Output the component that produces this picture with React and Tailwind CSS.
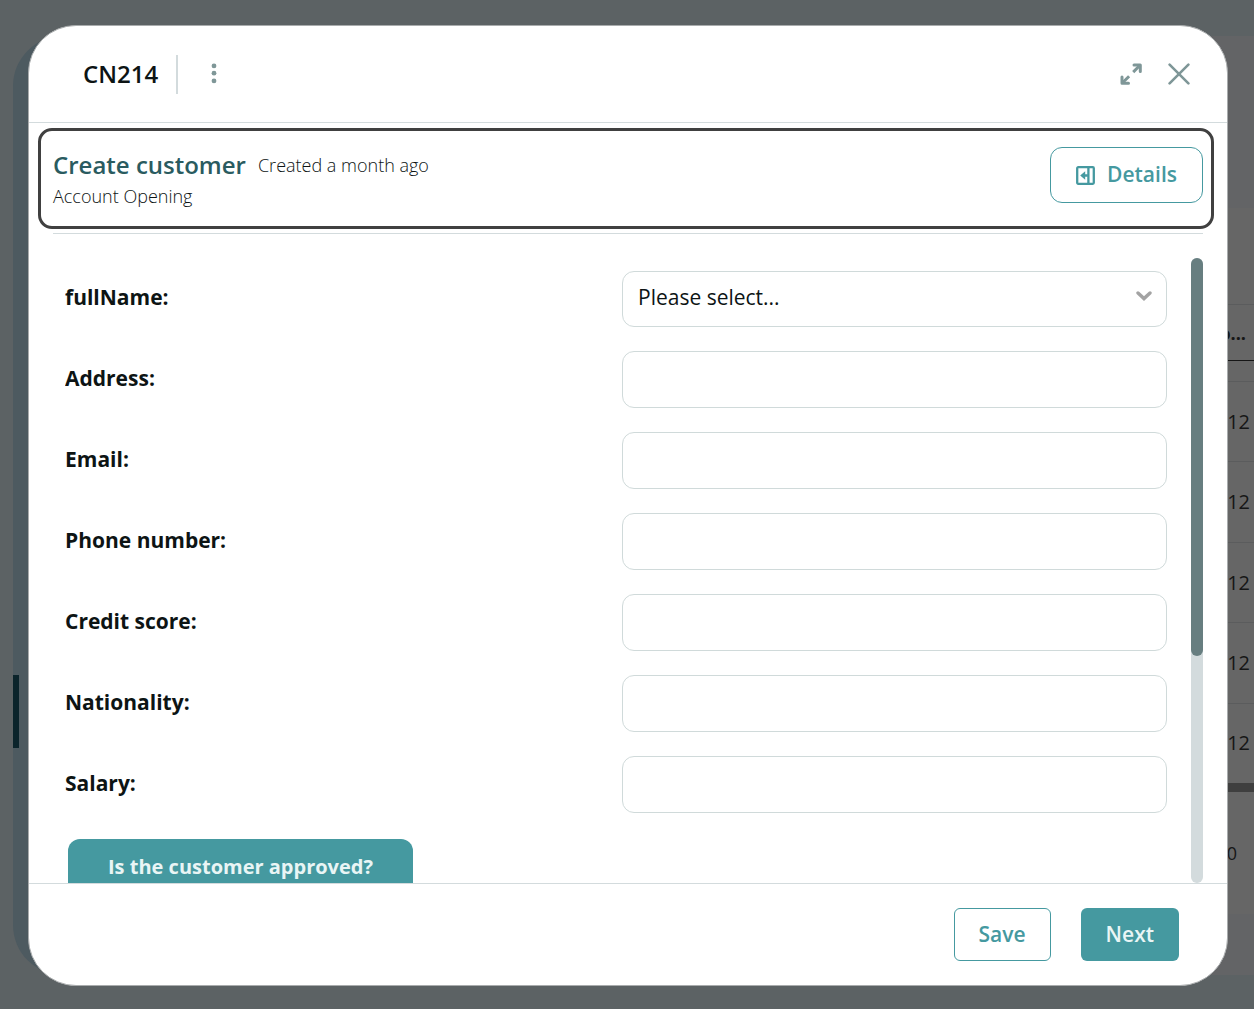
import React, { useState } from 'react';

const textFields = [
  { id: 'address', label: 'Address:' },
  { id: 'email', label: 'Email:' },
  { id: 'phone', label: 'Phone number:' },
  { id: 'creditScore', label: 'Credit score:' },
  { id: 'nationality', label: 'Nationality:' },
  { id: 'salary', label: 'Salary:' },
];

const tableRows = ['12', '12', '12', '12', '12'];

const MoreIcon = () => (
  <svg width="6" height="22" viewBox="0 0 6 22" fill="currentColor" aria-hidden="true">
    <circle cx="3" cy="2.900" r="2.4" />
    <circle cx="3" cy="10.2" r="2.4" />
    <circle cx="3" cy="17.900" r="2.4" />
  </svg>
);

const ExpandIcon = () => (
  <svg width="22" height="22" viewBox="0 0 22 22" fill="none" stroke="currentColor" strokeWidth="3" strokeLinejoin="round" aria-hidden="true">
    <path d="M14 2h6.300v6.500M2 14v6.300h6.500" strokeLinecap="round" />
    <path d="M19.500 2.800l-6.300 6.300M2.800 19.500l6.300-6.300" />
  </svg>
);

const CloseIcon = () => (
  <svg width="22" height="22" viewBox="0 0 22 22" fill="none" stroke="currentColor" strokeWidth="2.6" strokeLinecap="round" aria-hidden="true">
    <path d="M1.6 1.6l18.8 18.8M20.4 1.6L1.6 20.4" />
  </svg>
);

const PanelIcon = () => (
  <svg width="19" height="19" viewBox="0 0 19 19" fill="none" stroke="currentColor" strokeWidth="2.300" aria-hidden="true">
    <rect x="1.2" y="1.2" width="16.600" height="16.600" rx="1" />
    <path d="M12.400 1v17" />
    <path d="M7 9.500h4.800" strokeWidth="2.600" />
    <path d="M9.200 5.200v8.600L4.200 9.500z" fill="currentColor" stroke="none" />
  </svg>
);

const ChevronIcon = () => (
  <svg width="16" height="10" viewBox="0 0 16 10" fill="none" stroke="currentColor" strokeWidth="3.4" strokeLinecap="round" aria-hidden="true">
    <path d="M2 2l6 5.600L14 2" />
  </svg>
);

// Dimmed page that stays visible around the dialog
const Backdrop = () => (
  <div className="absolute inset-0 overflow-hidden bg-[#5c6264]" aria-hidden="true">
    <div className="absolute top-9 bottom-[34px] left-[13px] right-0 rounded-l-[50px] bg-[#4d5a60]" />
    <div className="absolute top-[675px] left-[13px] h-[73px] w-[6px] bg-[#0b242b]" />
    <div className="absolute top-9 bottom-[34px] right-0 flex w-[60px] flex-col bg-[#666666] text-xl text-[#161616]">
      <div className="h-[172px] shrink-0 bg-[#636466]" />
      <div className="h-24 shrink-0" />
      <div className="flex h-[57px] shrink-0 items-center justify-end border-t border-b border-t-[#5b5c5d] border-b-[#161616] pr-2 text-lg font-bold">
        o...
      </div>
      <div className="h-5 shrink-0" />
      <div className="flex h-[402px] shrink-0 flex-col">
        {tableRows.map((cell, index) => (
          <div key={index} className="flex flex-1 items-center justify-end border-t border-[#5b5c5d] pr-1">
            {cell}
          </div>
        ))}
      </div>
      <div className="h-[9px] shrink-0 bg-[#3f3f3f]" />
      <div className="flex h-[122px] shrink-0 items-center justify-end pr-[17px] text-lg">0</div>
      <div className="flex-1 bg-[#636466]" />
    </div>
  </div>
);

const App = () => {
  const [values, setValues] = useState({});

  const handleChange = (e) => {
    setValues({ ...values, [e.target.id]: e.target.value });
  };

  return (
    <div className="relative h-screen min-h-[600px] pt-[25px] pr-[26px] pb-[23px] pl-7 font-['Open_Sans','Noto_Sans',sans-serif] text-[#0d1414]">
      <Backdrop />

      <div role="dialog" aria-labelledby="case-title" className="relative flex h-full flex-col overflow-hidden rounded-[48px] border border-[#a9acad] bg-white">
        <header className="flex h-[97px] shrink-0 items-center border-b border-[#d3dbdd] pr-[37px] pl-[54px]">
          <h1 id="case-title" className="border-r-2 border-[#d3dbdd] pr-[18px] pb-[2px] text-2xl leading-[37px] font-semibold">CN214</h1>
          <button type="button" aria-label="More actions" className="ml-[33px] text-[#7f9798]">
            <MoreIcon />
          </button>
          <button type="button" aria-label="Expand" className="ml-auto text-[#7f9798]">
            <ExpandIcon />
          </button>
          <button type="button" aria-label="Close" className="ml-[26px] text-[#7f9798]">
            <CloseIcon />
          </button>
        </header>

        <section className="mt-[5px] mr-[13px] ml-[9px] flex h-[101px] shrink-0 items-start justify-between rounded-[14px] border-[3px] border-[#404040] pt-4 pr-2 pl-3">
          <div>
            <div className="flex items-center gap-3">
              <h2 className="text-2xl leading-9 font-semibold text-[#2a5b60]">Create customer</h2>
              <span className="text-lg font-light">Created a month ago</span>
            </div>
            <p className="text-lg leading-[26px] font-light">Account Opening</p>
          </div>
          <button type="button" className="flex h-14 items-center gap-3 rounded-xl border border-[#4599a0] px-[25px] text-[21px] font-semibold text-[#4599a0]">
            <PanelIcon />
            Details
          </button>
        </section>

        <div className="mx-6 mt-1 shrink-0 border-t border-[#d3dbdd]" />

        <div className="mt-6 flex min-h-0 flex-1 pr-6 pl-9">
          <form className="flex min-w-0 flex-1 flex-col gap-6 overflow-hidden pt-[13px] pr-6">
            <div className="grid shrink-0 grid-cols-2 items-center gap-3">
              <label htmlFor="fullName" className="pb-[2px] text-[21px] font-bold">fullName:</label>
              <div className="relative">
                <select
                  id="fullName"
                  onChange={handleChange}
                  className="block h-14 w-full appearance-none rounded-xl border border-[#d0dada] bg-white px-[15px] pb-[2px] text-[21px]"
                >
                  <option value="">Please select...</option>
                </select>
                <span className="pointer-events-none absolute top-5 right-[15px] text-[#a3a3a3]">
                  <ChevronIcon />
                </span>
              </div>
            </div>

            {textFields.map((field) => (
              <div key={field.id} className="grid shrink-0 grid-cols-2 items-center gap-3">
                <label htmlFor={field.id} className="pb-[2px] text-[21px] font-bold">{field.label}</label>
                <input
                  id={field.id}
                  type="text"
                  value={values[field.id] || ''}
                  onChange={handleChange}
                  className="block h-[57px] w-full rounded-xl border border-[#d0dada] bg-white px-[15px] text-[21px]"
                />
              </div>
            ))}

            <button type="button" className="mt-[2px] ml-[3px] h-14 shrink-0 self-start rounded-xl bg-[#4599a0] px-10 text-xl font-bold text-[#e9f5f5]">
              Is the customer approved?
            </button>
          </form>

          <div className="w-3 rounded-full bg-[#d3dbdd]">
            <div className="h-7/11 rounded-full bg-[#677e80]" />
          </div>
        </div>

        <footer className="flex h-[102px] shrink-0 items-center justify-end gap-[30px] border-t border-[#d3dbdd] pr-12">
          <button type="button" className="h-[53px] rounded-md border border-[#4599a0] px-6 text-[21px] font-semibold text-[#4599a0]">
            Save
          </button>
          <button type="button" className="h-[53px] rounded-md bg-[#4599a0] px-[25px] text-[21px] font-semibold text-[#e9f5f5]">
            Next
          </button>
        </footer>
      </div>
    </div>
  );
};

export default App;
